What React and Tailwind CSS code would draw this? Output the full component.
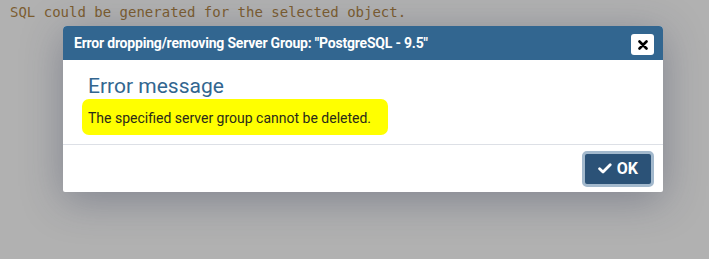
import React from 'react';

const Check = () => (
  <svg width="14" height="11" viewBox="0 0 14 11" className="mr-[5px]">
    <path d="M1.6 5.8 L5 9 L12.2 1.8" fill="none" stroke="white" strokeWidth="2.8" strokeLinecap="round" strokeLinejoin="round" />
  </svg>
);

const App = () => {
  return (
    <div className="relative w-[709px] h-[259px] overflow-hidden bg-[#b1b1b1] font-['Roboto',sans-serif]">
      {/* page text behind the overlay */}
      <p className="pl-[10px] pt-[3px] text-[14px] leading-[18px] text-[#7c5d30] font-['DejaVu_Sans_Mono',monospace] whitespace-nowrap">
        SQL could be generated for the selected object.
      </p>

      {/* error dialog */}
      <div className="absolute left-[63px] top-[26px] w-[600px] bg-white rounded-t-[4px] rounded-b-[2px] shadow-[0_8px_40px_rgba(40,50,80,0.35)]">
        <div className="flex items-center justify-between h-[34px] pl-[11px] pr-[9px] bg-[#326690] rounded-t-[4px]">
          <span className="text-white text-[14px] font-bold tracking-[-0.2px]">
            Error dropping/removing Server Group: "PostgreSQL - 9.5"
          </span>
          <button className="flex items-center justify-center w-[23px] h-[21px] mt-[3px] bg-white rounded-[3px]">
            <svg width="10" height="10" viewBox="0 0 10 10">
              <path d="M1.5 1.5 L8.5 8.5 M8.5 1.5 L1.5 8.5" stroke="black" strokeWidth="2.6" strokeLinecap="round" />
            </svg>
          </button>
        </div>

        <div className="h-[85px] pl-[19px] pt-[13px] border-b border-[#dde0e6]">
          <h3 className="pl-[6px] text-[21px] leading-[26px] text-[#326690] font-normal">Error message</h3>
          <div className="inline-block mt-[0px] pl-[6px] pr-[17px] pt-[7px] pb-[5px] bg-[#ffff00] rounded-[7px]">
            <span className="text-[14px] leading-[20px] text-[#2a2a1a]">The specified server group cannot be deleted.</span>
          </div>
        </div>

        <div className="flex justify-end items-center h-[47px] pr-[9px]">
          <button className="flex items-center h-[36px] px-[13px] bg-[#2b5277] text-white text-[16px] font-bold rounded-[5px] border-[3px] border-[#a3b9cd]">
            <Check />
            OK
          </button>
        </div>
      </div>
    </div>
  );
};

export default App;
